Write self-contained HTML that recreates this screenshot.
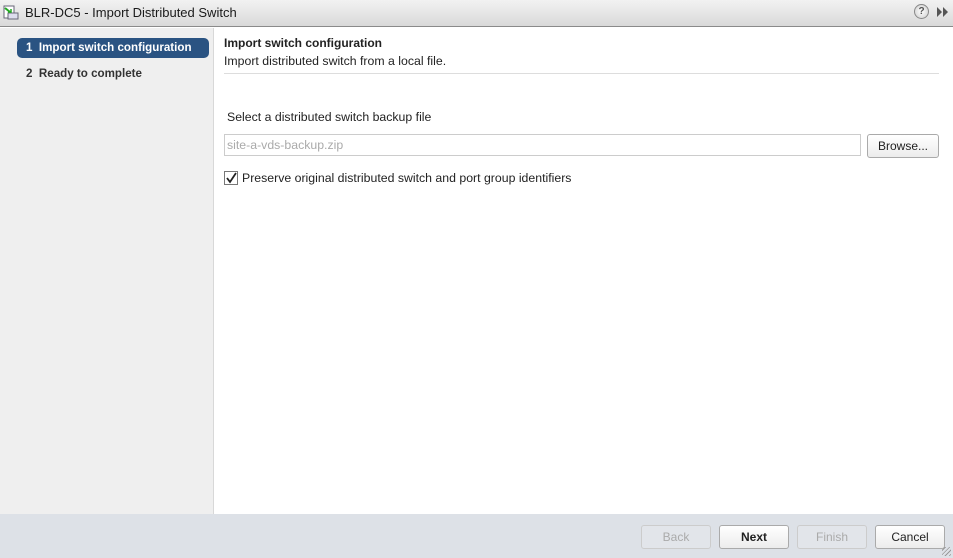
<!DOCTYPE html>
<html><head><style>
*{box-sizing:border-box;margin:0;padding:0}
body{width:953px;height:558px;overflow:hidden;font-family:"Liberation Sans",Arial,sans-serif;font-size:12.3px;color:#222;background:#fff;position:relative}
.title{position:absolute;left:0;top:0;width:953px;height:27px;background:linear-gradient(#f2f2f2,#d9d9d9);border-bottom:1px solid #8a8a8a}
.title .t{position:absolute;left:25px;top:5px;font-size:13px;color:#1a1a1a}
.icon{position:absolute;left:3px;top:5px;width:16px;height:15px}
.help{position:absolute;left:914px;top:4px;width:15px;height:15px;border-radius:50%;border:1px solid #888;background:radial-gradient(#fff,#ccc);font-size:10px;font-weight:bold;text-align:center;line-height:13px;color:#555}
.side{position:absolute;left:0;top:28px;width:214px;height:486px;background:#efefef;border-right:1px solid #d8d8d8}
.step1{position:absolute;left:17px;top:10px;width:192px;height:20px;background:#2a5382;border-radius:5px;color:#fff;font-weight:bold;padding:3px 0 0 9px;font-size:11.6px}
.step2{position:absolute;left:26px;top:39px;font-weight:bold;color:#333;font-size:11.6px}
.h1{position:absolute;left:224px;top:36px;font-weight:bold;font-size:12px}
.h2{position:absolute;left:224px;top:54px}
.hr{position:absolute;left:224px;top:73px;width:715px;height:1px;background:#ddd}
.lbl{position:absolute;left:227px;top:110px}
.inp{position:absolute;left:224px;top:134px;width:637px;height:22px;border:1px solid #ccc;color:#aaa;padding:3px 0 0 2px}
.btn{position:absolute;height:24px;border:1px solid #aaa;border-radius:3px;background:linear-gradient(#fff,#ececec);text-align:center;line-height:22px;color:#222;font-size:12px}
.cb{position:absolute;left:224px;top:171px;width:14px;height:14px;border:1px solid #777;background:#fff}
.cbl{position:absolute;left:242px;top:171px}
.foot{position:absolute;left:0;top:514px;width:953px;height:44px;background:#dde1e7}
.dis{color:#aaa;border-color:#ccc;background:#e2e5ea}
.grip{position:absolute;right:2px;bottom:2px;width:9px;height:9px;background:repeating-linear-gradient(135deg,transparent 0 2px,#999 2px 3px)}
</style></head><body>
<div class="title">
<svg class="icon" viewBox="0 0 16 15"><rect x="1" y="1" width="10" height="12" fill="#fff" stroke="#667"/><rect x="5" y="8" width="10" height="6" fill="#dde" stroke="#667"/><path d="M2 3l5 4" stroke="#2a2" stroke-width="2"/><path d="M5 7h3v-3" stroke="#2a2" stroke-width="1.5" fill="none"/></svg>
<div class="t">BLR-DC5 - Import Distributed Switch</div>
<div class="help">?</div>
<svg style="position:absolute;left:937px;top:7px" width="12" height="10" viewBox="0 0 12 10"><path d="M0 0l5 5-5 5zM6 0l5 5-5 5z" fill="#555"/></svg>
</div>
<div class="side">
<div class="step1">1&nbsp; Import switch configuration</div>
<div class="step2">2&nbsp; Ready to complete</div>
</div>
<div class="h1">Import switch configuration</div>
<div class="h2">Import distributed switch from a local file.</div>
<div class="hr"></div>
<div class="lbl">Select a distributed switch backup file</div>
<div class="inp">site-a-vds-backup.zip</div>
<div class="btn" style="left:867px;top:134px;width:72px">Browse...</div>
<div class="cb"><svg width="12" height="12" viewBox="0 0 12 12"><path d="M2 6l3 4 6-9" stroke="#222" stroke-width="1.8" fill="none"/></svg></div>
<div class="cbl">Preserve original distributed switch and port group identifiers</div>
<div class="foot">
<div class="btn dis" style="left:641px;top:11px;width:70px">Back</div>
<div class="btn" style="left:719px;top:11px;width:70px;font-weight:bold">Next</div>
<div class="btn dis" style="left:797px;top:11px;width:70px">Finish</div>
<div class="btn" style="left:875px;top:11px;width:70px">Cancel</div>
<div class="grip"></div>
</div>
</body></html>
